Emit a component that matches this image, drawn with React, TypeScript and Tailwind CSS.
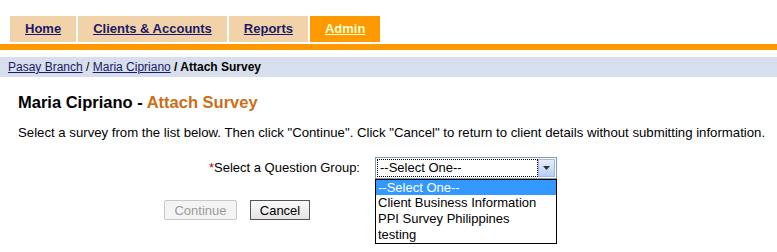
import React from "react";

export default function App() {
  const tabs = [
    { label: "Home", active: false },
    { label: "Clients & Accounts", active: false },
    { label: "Reports", active: false },
    { label: "Admin", active: true },
  ];
  return (
    <div className="w-[777px] h-[252px] bg-white overflow-hidden" style={{ fontFamily: '"Liberation Sans", Arial, sans-serif' }}>
      <div className="flex gap-[2px] pl-[10px] pt-[16px]">
        {tabs.map((t) => (
          <div
            key={t.label}
            className={`h-[26px] px-[15px] flex items-center text-[13px] font-bold underline ${
              t.active ? "bg-[#ff9900] text-[#ffffcc]" : "bg-[#f2d3a9] text-[#1a1a66]"
            }`}
          >
            {t.label}
          </div>
        ))}
      </div>
      <div className="mt-[2px] h-[6px] bg-[#ff9900]" />
      <div className="mt-[7px] h-[20px] bg-[#d7deec] flex items-center pl-[8px] text-[12px] text-black">
        <span className="underline text-[#1a1a66]">Pasay Branch</span>
        <span>&nbsp;/&nbsp;</span>
        <span className="underline text-[#1a1a66]">Maria Cipriano</span>
        <span className="font-bold">&nbsp;/ Attach Survey</span>
      </div>
      <div className="pl-[18px] mt-[15px] text-[16.5px] font-bold leading-[20px] text-black">
        Maria Cipriano - <span className="text-[#cc6e19]">Attach Survey</span>
      </div>
      <div className="pl-[18px] mt-[13px] text-[13.2px] leading-[15px] text-black whitespace-nowrap">
        Select a survey from the list below. Then click "Continue". Click "Cancel" to return to client details without submitting information.
      </div>
      <div className="flex mt-[17px]">
        <div className="w-[375px] text-right text-[13px] leading-[22px] pr-[15px]">
          <span className="text-[#cc0000]">*</span>Select a Question Group:
        </div>
        <div className="relative">
          <div className="w-[182px] h-[22px] border border-[#7f9db9] bg-white flex items-center p-[1px]">
            <div className="flex-1 h-full border border-dotted border-black flex items-center pl-[2px] text-[13px]">
              --Select One--
            </div>
            <div className="w-[17px] h-full bg-gradient-to-b from-[#e6efff] to-[#b9cdf3] border border-[#9fb6e6] flex items-center justify-center">
              <svg width="7" height="4" viewBox="0 0 7 4"><path d="M0 0h7L3.5 4z" fill="#333" /></svg>
            </div>
          </div>
          <div className="absolute left-0 top-[22px] w-[182px] border border-black bg-white text-[13px] leading-[16px]">
            <div className="bg-[#3399ff] text-white pl-[2px] h-[15px] leading-[15px]">--Select One--</div>
            <div className="pl-[2px]">Client Business Information</div>
            <div className="pl-[2px]">PPI Survey Philippines</div>
            <div className="pl-[2px]">testing</div>
          </div>
        </div>
      </div>
      <div className="flex gap-[13px] pl-[164px] mt-[21px]">
        <button className="w-[73px] h-[20px] border border-[#c8c8c8] rounded-[2px] bg-[#f4f4f4] text-[13px] text-[#9a9a9a]" disabled>
          Continue
        </button>
        <button className="w-[60px] h-[20px] border border-[#555] bg-gradient-to-b from-[#fafafa] to-[#e4e4e4] text-[13px] text-black">
          Cancel
        </button>
      </div>
    </div>
  );
}
